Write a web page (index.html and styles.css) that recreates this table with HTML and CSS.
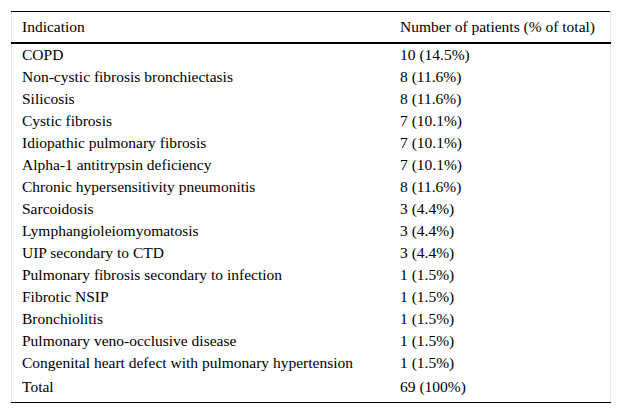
FILE: index.html
```html
<!DOCTYPE html>
<html>
<head>
<meta charset="utf-8">
<link rel="stylesheet" href="styles.css">
</head>
<body>
<div class="wrap">
<table class="tbl">
<thead>
<tr><th class="c1">Indication</th><th class="c2">Number of patients (% of total)</th></tr>
</thead>
<tbody>
<tr><td>COPD</td><td>10 (14.5%)</td></tr>
<tr><td>Non-cystic fibrosis bronchiectasis</td><td>8 (11.6%)</td></tr>
<tr><td>Silicosis</td><td>8 (11.6%)</td></tr>
<tr><td>Cystic fibrosis</td><td>7 (10.1%)</td></tr>
<tr><td>Idiopathic pulmonary fibrosis</td><td>7 (10.1%)</td></tr>
<tr><td>Alpha-1 antitrypsin deficiency</td><td>7 (10.1%)</td></tr>
<tr><td>Chronic hypersensitivity pneumonitis</td><td>8 (11.6%)</td></tr>
<tr><td>Sarcoidosis</td><td>3 (4.4%)</td></tr>
<tr><td>Lymphangioleiomyomatosis</td><td>3 (4.4%)</td></tr>
<tr><td>UIP secondary to CTD</td><td>3 (4.4%)</td></tr>
<tr><td>Pulmonary fibrosis secondary to infection</td><td>1 (1.5%)</td></tr>
<tr><td>Fibrotic NSIP</td><td>1 (1.5%)</td></tr>
<tr><td>Bronchiolitis</td><td>1 (1.5%)</td></tr>
<tr><td>Pulmonary veno-occlusive disease</td><td>1 (1.5%)</td></tr>
<tr><td>Congenital heart defect with pulmonary hypertension</td><td>1 (1.5%)</td></tr>
<tr class="total"><td>Total</td><td>69 (100%)</td></tr>
</tbody>
</table>
</div>
</body>
</html>
```
FILE: styles.css
```css
html, body {
  margin: 0;
  padding: 0;
  background: #ffffff;
  font-family: "Liberation Serif", "Times New Roman", Times, serif;
}
.wrap {
  padding: 11px 0 0 11px;
}
.tbl {
  width: 600px;
  border-collapse: collapse;
  font-family: "Liberation Serif", "Times New Roman", Times, serif;
  font-size: 15.5px;
  color: #000;
  border-left: 1px solid #e6e6e6;
  border-right: 1px solid #e6e6e6;
  border-top: 1px solid #000;
  border-bottom: 1px solid #000;
}
.tbl th {
  font-weight: normal;
  text-align: left;
  vertical-align: top;
  height: 17px;
  padding: 6px 0 7px 10px;
  border-bottom: 2px solid #000;
  line-height: 17px;
}
.tbl th.c1 { width: 368px; }
.tbl td {
  height: 17px;
  padding: 2px 0 3px 10px;
  line-height: 17px;
  vertical-align: top;
}
.tbl tr.total td {
  padding-top: 4px;
  padding-bottom: 7px;
}
```
